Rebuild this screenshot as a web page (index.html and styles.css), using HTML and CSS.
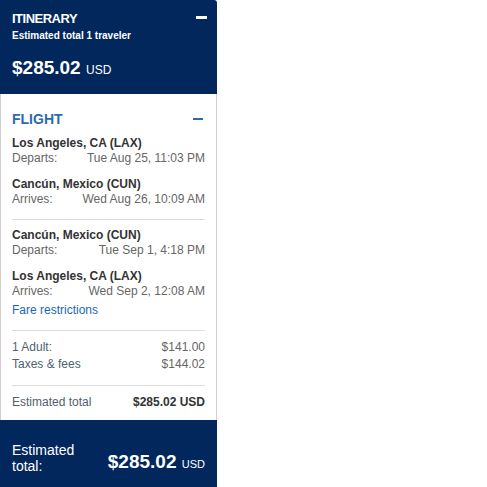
FILE: index.html
```html
<!DOCTYPE html>
<html lang="en">

<head>
    <meta charset="UTF-8">
    <meta name="viewport" content="width=device-width, initial-scale=1.0">
    <title>Itinerary</title>
    <link rel="stylesheet" href="styles.css">
</head>

<body>
    <aside class="panel">
        <div class="summary">
            <div class="summary-top">
                <h1 class="summary-title">ITINERARY</h1>
                <span class="minus minus-light"></span>
            </div>
            <p class="summary-sub">Estimated total 1 traveler</p>
            <p class="summary-price">$285.02 <span class="cur">USD</span></p>
        </div>

        <div class="details">
            <div class="details-top">
                <h2 class="details-title">FLIGHT</h2>
                <span class="minus minus-blue"></span>
            </div>

            <div class="leg">
                <div class="stop">
                    <p class="city">Los Angeles, CA (LAX)</p>
                    <p class="row"><span>Departs:</span><span>Tue Aug 25, 11:03 PM</span></p>
                </div>
                <div class="stop">
                    <p class="city">Cancún, Mexico (CUN)</p>
                    <p class="row"><span>Arrives:</span><span>Wed Aug 26, 10:09 AM</span></p>
                </div>
            </div>

            <div class="leg leg-last">
                <div class="stop">
                    <p class="city">Cancún, Mexico (CUN)</p>
                    <p class="row"><span>Departs:</span><span>Tue Sep 1, 4:18 PM</span></p>
                </div>
                <div class="stop">
                    <p class="city">Los Angeles, CA (LAX)</p>
                    <p class="row"><span>Arrives:</span><span>Wed Sep 2, 12:08 AM</span></p>
                </div>
                <a href="#" class="fare-link">Fare restrictions</a>
            </div>

            <div class="prices">
                <p class="row"><span>1 Adult:</span><span>$141.00</span></p>
                <p class="row row-tax"><span>Taxes &amp; fees</span><span>$144.02</span></p>
            </div>

            <div class="total">
                <p class="row"><span>Estimated total</span><strong>$285.02 USD</strong></p>
            </div>
        </div>

        <div class="footer">
            <span class="footer-label">Estimated total:</span>
            <span class="footer-price">$285.02 <span class="cur-small">USD</span></span>
        </div>
    </aside>
</body>

</html>
```

FILE: styles.css
```css
* {
    margin: 0;
    padding: 0;
    box-sizing: border-box;
}

body {
    background-color: #fff;
    font-family: "Liberation Sans", Arial, sans-serif;
    font-size: 12px;
    line-height: 15px;
    color: #333;
}

.panel {
    width: 217px;
}

/* navy summary on top */
.summary {
    background-color: #02275d;
    color: #fff;
    padding: 11px 10px 13px 12px;
    border-top-right-radius: 3px;
}

.summary-top {
    display: flex;
    justify-content: space-between;
    align-items: flex-start;
}

.summary-title {
    font-size: 13px;
    line-height: 16px;
    letter-spacing: -0.5px;
    font-weight: bold;
}

.minus {
    display: block;
    width: 11px;
    height: 3px;
}

.minus-light {
    background-color: #fff;
    margin-top: 5px;
}

.summary-sub {
    font-size: 10px;
    line-height: 13px;
    font-weight: bold;
    margin-top: 2px;
}

.summary-price {
    font-size: 19px;
    line-height: 22px;
    font-weight: bold;
    margin-top: 15px;
}

.cur {
    font-size: 12px;
    font-weight: normal;
}

/* white flight box */
.details {
    border-left: 1px solid #cfcfcf;
    border-right: 1px solid #cfcfcf;
    padding: 16px 11px 10px 11px;
}

.details-top {
    display: flex;
    justify-content: space-between;
    align-items: flex-start;
}

.details-title {
    font-size: 14px;
    line-height: 18px;
    font-weight: bold;
    color: #2c6aa8;
}

.minus-blue {
    width: 10px;
    height: 2px;
    background-color: #2c6aa8;
    margin-top: 8px;
    margin-right: 2px;
}

.leg {
    margin-top: 8px;
    padding-bottom: 12px;
    border-bottom: 1px solid #dcdcdc;
}

.stop + .stop {
    margin-top: 11px;
}

.city {
    font-weight: bold;
    color: #333;
}

.row {
    display: flex;
    justify-content: space-between;
    color: #666;
}

.fare-link {
    display: block;
    margin-top: 4px;
    color: #1d68ad;
    text-decoration: none;
}

.prices {
    margin-top: 9px;
    padding-bottom: 13px;
    border-bottom: 1px solid #dcdcdc;
}

.prices .row span:first-child,
.total .row span {
    color: #4f5f70;
}

.row-tax {
    margin-top: 2px;
}

.total {
    margin-top: 9px;
}

.total strong {
    color: #333;
}

/* navy total at the bottom */
.footer {
    background-color: #02275d;
    color: #fff;
    display: flex;
    justify-content: space-between;
    align-items: flex-end;
    padding: 22px 12px 14px 12px;
}

.footer-label {
    font-size: 14px;
    line-height: 16px;
    max-width: 80px;
}

.footer-price {
    font-size: 19px;
    line-height: 20px;
    font-weight: bold;
}

.cur-small {
    font-size: 11px;
    font-weight: normal;
}
```
